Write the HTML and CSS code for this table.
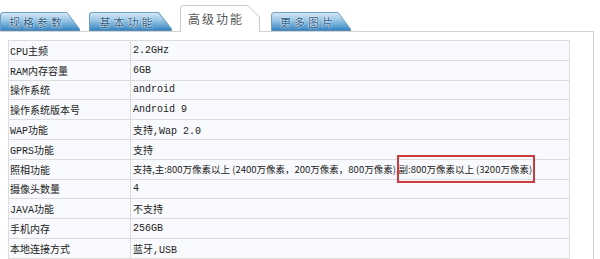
FILE: index.html
```html
<!DOCTYPE html>
<html lang="zh">
<head>
<meta charset="utf-8">
<link rel="stylesheet" href="styles.css">
</head>
<body>
<div class="tabs">
  <div class="tab tab-1"><svg class="tab-bg" viewBox="0 0 80 19" preserveAspectRatio="none"><use href="#blue"/></svg><span class="tab-label">规格参数</span></div>
  <div class="tab tab-2"><svg class="tab-bg" viewBox="0 0 80 19" preserveAspectRatio="none"><use href="#blue"/></svg><span class="tab-label">基本功能</span></div>
  <div class="tab tab-active"><svg class="tab-bg" viewBox="0 0 80 27" preserveAspectRatio="none"><path d="M0.5 27 V3 Q0.5 0.5 3 0.5 H68 L79.5 12 V27" fill="#fff" stroke="#c9c9c9" stroke-width="1"/></svg><span class="tab-label">高级功能</span></div>
  <div class="tab tab-4"><svg class="tab-bg" viewBox="0 0 80 19" preserveAspectRatio="none"><use href="#blue"/></svg><span class="tab-label">更多图片</span></div>
</div>
<svg class="defs" width="0" height="0">
  <defs>
    <linearGradient id="g" x1="0" y1="0" x2="0" y2="1">
      <stop offset="0" stop-color="#d6e9f6"/>
      <stop offset="0.4" stop-color="#9dc8e6"/>
      <stop offset="0.75" stop-color="#5a9fd0"/>
      <stop offset="1" stop-color="#2f7ab8"/>
    </linearGradient>
    <path id="blue" d="M0.5 19 V3 Q0.5 0.5 3 0.5 H67 L79.5 17 V19 Z" fill="url(#g)" stroke="#6f9fc4" stroke-width="1"/>
  </defs>
</svg>
<div class="panel">
  <table class="spec">
    <tr><td class="k">CPU主频</td><td class="v">2.2GHz</td></tr>
    <tr><td class="k">RAM内存容量</td><td class="v">6GB</td></tr>
    <tr><td class="k">操作系统</td><td class="v">android</td></tr>
    <tr><td class="k">操作系统版本号</td><td class="v">Android 9</td></tr>
    <tr><td class="k">WAP功能</td><td class="v">支持,Wap 2.0</td></tr>
    <tr><td class="k">GPRS功能</td><td class="v">支持</td></tr>
    <tr><td class="k">照相功能</td><td class="v cam">支持,主:800万像素以上 (2400万像素，200万像素，800万像素),<span class="mark">副:800万像素以上 (3200万像素)</span></td></tr>
    <tr><td class="k">摄像头数量</td><td class="v">4</td></tr>
    <tr><td class="k">JAVA功能</td><td class="v">不支持</td></tr>
    <tr><td class="k">手机内存</td><td class="v">256GB</td></tr>
    <tr><td class="k">本地连接方式</td><td class="v">蓝牙,USB</td></tr>
  </table>
</div>
</body>
</html>
```
FILE: styles.css
```css
html, body {
  margin: 0;
  padding: 0;
  background: #fff;
}
body {
  font-family: "Liberation Mono", "Noto Sans CJK SC", monospace;
  font-size: 10px;
  color: #222;
  overflow: hidden;
}
.defs {
  position: absolute;
  width: 0;
  height: 0;
}
.tabs {
  display: flex;
  align-items: flex-end;
  height: 31px;
}
.tab {
  position: relative;
  width: 80px;
  height: 19px;
  display: flex;
  align-items: center;
  justify-content: center;
}
.tab-2 { margin-left: 9px; width: 83px; }
.tab-active { margin-left: 8px; z-index: 1; margin-bottom: -1px; height: 27px; }
.tab-4 { margin-left: 11px; }
.tab-bg {
  position: absolute;
  left: 0;
  top: 0;
  width: 100%;
  height: 100%;
}
.tab-label {
  position: relative;
  font-family: "Noto Sans CJK SC", sans-serif;
  font-size: 11px;
  letter-spacing: 3px;
  color: #285b85;
  text-shadow: 0 0 2px #fff, 0 0 1px #fff;
  padding-right: 6px;
}
.tab-active .tab-label {
  color: #555;
  text-shadow: none;
  letter-spacing: 2px;
  font-size: 12px;
  padding-right: 8px;
}
.panel {
  width: 585px;
  height: 219px;
  overflow: hidden;
  border-top: 1px solid #d2d2d2;
  border-right: 1px solid #d2d2d2;
  padding: 8px 0 0 8px;
}
.spec {
  border-collapse: collapse;
  width: 562px;
  background: #f9fafd;
  border: 1px solid #d0d0d0;
}
.spec td {
  height: 18.8px;
  padding: 0 0 0 1px;
  border: 1px solid #dcdcdc;
  white-space: nowrap;
  vertical-align: middle;
}
.spec .k {
  width: 120px;
}
.spec .v {
  padding-left: 2px;
}
.spec .cam {
  font-family: "Noto Sans CJK SC", sans-serif;
  font-size: 9.5px;
}
.mark {
  position: relative;
}
.mark::after {
  content: "";
  position: absolute;
  left: -2px;
  right: -3px;
  top: -7px;
  bottom: -7px;
  border: 2px solid #cf3a3f;
}
```
